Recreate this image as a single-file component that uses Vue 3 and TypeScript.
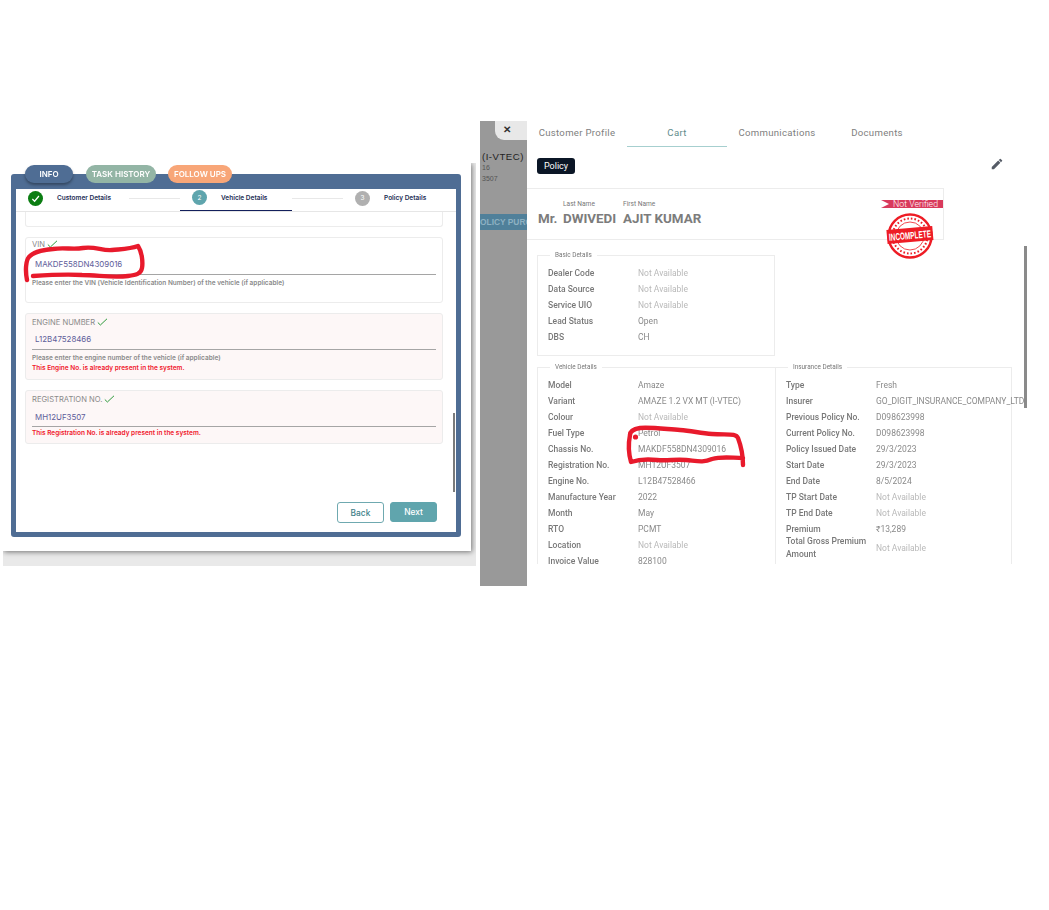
<script setup lang="ts">
type Row = { label: string; value: string; tall?: boolean }
const basic: Row[] = [
  { label: 'Dealer Code', value: 'Not Available' },
  { label: 'Data Source', value: 'Not Available' },
  { label: 'Service UIO', value: 'Not Available' },
  { label: 'Lead Status', value: 'Open' },
  { label: 'DBS', value: 'CH' },
]
const vehicle: Row[] = [
  { label: 'Model', value: 'Amaze' },
  { label: 'Variant', value: 'AMAZE 1.2 VX MT (I-VTEC)' },
  { label: 'Colour', value: 'Not Available' },
  { label: 'Fuel Type', value: 'Petrol' },
  { label: 'Chassis No.', value: 'MAKDF558DN4309016' },
  { label: 'Registration No.', value: 'MH12UF3507' },
  { label: 'Engine No.', value: 'L12B47528466' },
  { label: 'Manufacture Year', value: '2022' },
  { label: 'Month', value: 'May' },
  { label: 'RTO', value: 'PCMT' },
  { label: 'Location', value: 'Not Available' },
  { label: 'Invoice Value', value: '828100' },
]
const insurance: Row[] = [
  { label: 'Type', value: 'Fresh' },
  { label: 'Insurer', value: 'GO_DIGIT_INSURANCE_COMPANY_LTD' },
  { label: 'Previous Policy No.', value: 'D098623998' },
  { label: 'Current Policy No.', value: 'D098623998' },
  { label: 'Policy Issued Date', value: '29/3/2023' },
  { label: 'Start Date', value: '29/3/2023' },
  { label: 'End Date', value: '8/5/2024' },
  { label: 'TP Start Date', value: 'Not Available' },
  { label: 'TP End Date', value: 'Not Available' },
  { label: 'Premium', value: '₹13,289' },
  { label: 'Total Gross Premium Amount', value: 'Not Available', tall: true },
]
const sections = [
  { title: 'Vehicle Details', rows: vehicle },
  { title: 'Insurance Details', rows: insurance },
]
</script>

<template>
  <div class="canvas">
    <section class="left">
      <div class="sheet">
        <div class="tabs">
          <span class="tab info">INFO</span>
          <span class="tab history">TASK HISTORY</span>
          <span class="tab follow">FOLLOW UPS</span>
        </div>
        <div class="frame">
          <div class="stepper">
            <div class="step first">
              <span class="dot done">
                <svg width="9" height="9" viewBox="0 0 10 10"><path d="M1.5 5.5 4 8 8.8 2.2" fill="none" stroke="#fff" stroke-width="1.4" /></svg>
              </span>
              <span class="step-text">Customer Details</span>
            </div>
            <i class="step-line"></i>
            <div class="step active">
              <span class="dot teal">2</span>
              <span class="step-text">Vehicle Details</span>
            </div>
            <i class="step-line"></i>
            <div class="step last">
              <span class="dot grey">3</span>
              <span class="step-text">Policy Details</span>
            </div>
          </div>
          <div class="form">
            <div class="card stub"></div>
            <div class="card vin">
              <div class="label">VIN<svg class="tick" width="11" height="8" viewBox="0 0 11 8"><path d="M.8 4.5 3.4 7 10 .8" fill="none" stroke="#2e9a3c" stroke-width="1" /></svg></div>
              <div class="value">MAKDF558DN4309016</div>
              <div class="help">Please enter the VIN (Vehicle Identification Number) of the vehicle (if applicable)</div>
            </div>
            <div class="card warn engine">
              <div class="label">ENGINE NUMBER<svg class="tick" width="11" height="8" viewBox="0 0 11 8"><path d="M.8 4.5 3.4 7 10 .8" fill="none" stroke="#2e9a3c" stroke-width="1" /></svg></div>
              <div class="value">L12B47528466</div>
              <div class="help">Please enter the engine number of the vehicle (if applicable)</div>
              <div class="error">This Engine No. is already present in the system.</div>
            </div>
            <div class="card warn reg">
              <div class="label">REGISTRATION NO.<svg class="tick" width="11" height="8" viewBox="0 0 11 8"><path d="M.8 4.5 3.4 7 10 .8" fill="none" stroke="#2e9a3c" stroke-width="1" /></svg></div>
              <div class="value">MH12UF3507</div>
              <div class="error tight">This Registration No. is already present in the system.</div>
            </div>
            <div class="actions">
              <button class="btn back">Back</button>
              <button class="btn next">Next</button>
            </div>
            <i class="form-scroll"></i>
          </div>
        </div>
      </div>
    </section>

    <aside class="strip">
      <div class="close">✕</div>
      <div class="strip-title">(I-VTEC)</div>
      <div class="strip-sub first-sub">16</div>
      <div class="strip-sub">3507</div>
      <div class="strip-band">OLICY PURC</div>
    </aside>

    <main class="panel">
      <nav class="nav">
        <span class="nav-item">Customer Profile</span>
        <span class="nav-item current">Cart</span>
        <span class="nav-item">Communications</span>
        <span class="nav-item">Documents</span>
      </nav>
      <div class="badge-row">
        <span class="badge">Policy</span>
        <svg class="pencil" width="14" height="14" viewBox="0 0 24 24"><path fill="#555b66" d="M3 17.25V21h3.75L17.81 9.94l-3.75-3.75L3 17.25zM20.71 7.04a1 1 0 0 0 0-1.41l-2.34-2.34a1 1 0 0 0-1.41 0l-1.83 1.83 3.75 3.75 1.83-1.83z" /></svg>
      </div>
      <div class="name-box">
        <div class="name-col title"><span class="name-label">&nbsp;</span><b>Mr.</b></div>
        <div class="name-col last-name"><span class="name-label">Last Name</span><b>DWIVEDI</b></div>
        <div class="name-col"><span class="name-label">First Name</span><b>AJIT KUMAR</b></div>
        <span class="ribbon">Not Verified</span>
        <svg class="stamp" width="48" height="48" viewBox="0 0 48 48">
          <circle cx="24" cy="24" r="21.5" fill="#fff" stroke="#ee1c25" stroke-width="2.4" />
          <circle cx="24" cy="24" r="17.5" fill="none" stroke="#ee1c25" stroke-width="2" stroke-dasharray="1.6 2" />
          <circle cx="24" cy="24" r="14" fill="none" stroke="#ee1c25" stroke-width=".8" />
          <g transform="rotate(-5 24 24)">
            <rect x="1" y="16" width="46" height="14" fill="#ee1c25" />
            <text x="24" y="27" text-anchor="middle" textLength="42" lengthAdjust="spacingAndGlyphs" class="stamp-text">INCOMPLETE</text>
          </g>
        </svg>
      </div>

      <div class="body">
        <div class="group basic">
          <span class="legend">Basic Details</span>
          <div v-for="row in basic" :key="row.label" class="row">
            <span class="k">{{ row.label }}</span>
            <span class="v" :class="{ na: row.value === 'Not Available' }">{{ row.value }}</span>
          </div>
        </div>
        <div class="columns">
          <div v-for="sec in sections" :key="sec.title" class="group col">
            <span class="legend">{{ sec.title }}</span>
            <div v-for="row in sec.rows" :key="row.label" class="row" :class="{ tall: row.tall }">
              <span class="k">{{ row.label }}</span>
              <span class="v" :class="{ na: row.value === 'Not Available' }">{{ row.value }}</span>
            </div>
          </div>
        </div>
      </div>
      <i class="panel-scroll"></i>
    </main>

    <svg class="ink" width="1049" height="910" viewBox="0 0 1049 910">
      <path d="M27 280C25 270 26 260 29 257C33 252 42 250 53 249C65 247 72 250 83 248C95 246 102 251 112 250C122 249 130 249 138 246C142 252 143 262 142 268C141 274 136 275 128 276C112 278 98 275 82 275C66 274 48 275 33 276" />
      <path d="M743 465C743 456 741 446 738 438C736 433 728 435 712 434C700 433 692 431 680 430C665 429 650 427 640 428C634 429 630 431 630 435C628 445 629 455 631 462C640 459 648 459 657 460C668 461 675 459 686 460C697 461 703 463 712 459C722 456 732 458 743 458" />
      <circle cx="635.5" cy="437" r="2.6" />
    </svg>
  </div>
</template>

<style>
html, body { margin: 0; background: #fff; }
</style>

<style scoped>
.canvas {
  position: relative;
  width: 1049px;
  height: 910px;
  display: flex;
  align-items: flex-start;
  overflow: hidden;
  background: #fff;
}
.left {
  width: 473px;
  height: 403px;
  margin: 163px 0 0 3px;
  overflow: hidden;
  background: #e9e9e9;
  flex: none;
}
.sheet {
  width: 468px;
  height: 388px;
  box-sizing: border-box;
  padding: 2px 0 0 8px;
  background: #fff;
  box-shadow: 1px 1px 5px rgba(0, 0, 0, .5);
  font-family: "Inter", "Noto Sans", sans-serif;
  filter: blur(.3px);
}
.tabs {
  position: relative;
  z-index: 1;
  display: flex;
  height: 18px;
  margin-bottom: -9px;
  padding-left: 14px;
}
.tab {
  display: flex;
  align-items: center;
  justify-content: center;
  height: 18px;
  border-radius: 9px;
  font-size: 8px;
  font-weight: 600;
  color: #fff;
  white-space: nowrap;
}
.info { width: 48px; margin-right: 13px; background: #4f6d94; box-shadow: 0 2px 3px rgba(0, 0, 0, .35); }
.history { width: 70px; margin-right: 12px; background: #93b5a5; }
.follow { width: 64px; background: #f8a678; }
.frame {
  width: 450px;
  height: 363px;
  box-sizing: border-box;
  border: 5px solid #4f6d94;
  border-top-width: 15px;
  border-radius: 3px;
  background: #fff;
}
.stepper {
  display: flex;
  align-items: stretch;
  height: 23px;
  box-sizing: border-box;
  border-bottom: 1px solid #e6e6e6;
}
.step {
  display: flex;
  align-items: center;
  height: 22px;
  box-sizing: border-box;
  padding-bottom: 4px;
  color: #1c2e55;
}
.step.first { width: 113px; padding-left: 12px; }
.step.active { width: 112px; padding-left: 12px; border-bottom: 1px solid #14205c; }
.step.last { padding-left: 12px; }
.dot {
  display: flex;
  align-items: center;
  justify-content: center;
  width: 15px;
  height: 15px;
  margin-right: 14px;
  border-radius: 50%;
  font-size: 6.5px;
  color: #fff;
  flex: none;
}
.done { background: #0b7d12; }
.teal { background: #5fa5ad; }
.grey { background: #b0b0b0; }
.step-text { font-size: 6.5px; font-weight: 600; white-space: nowrap; }
.step-line { width: 51px; height: 1px; margin: 9px 0 0; background: #e8e8e8; }
.form {
  position: relative;
  height: 320px;
  box-sizing: border-box;
  padding: 0 13px 0 9px;
  overflow: hidden;
}
.card {
  box-sizing: border-box;
  width: 418px;
  margin-bottom: 10px;
  padding: 3px 6px 0;
  border: 1px solid #ececec;
  border-radius: 3px;
  background: #fff;
}
.card.stub { height: 15px; border-top: 0; border-radius: 0 0 3px 3px; }
.card.vin { height: 66px; }
.card.engine { height: 67px; }
.card.reg { height: 54px; }
.warn { background: #fdf7f7; }
.label {
  display: flex;
  align-items: flex-start;
  height: 12px;
  gap: 2px;
  font-size: 7.6px;
  line-height: 12px;
  color: #8a8a8a;
  white-space: pre;
}
.vin .label { margin-top: -2px; }
.tick { margin-top: 1px; }
.value {
  height: 17px;
  margin-top: 3px;
  padding-left: 3px;
  border-bottom: 1px solid #a5a5a5;
  font-size: 7.9px;
  line-height: 15px;
  color: #5e5d9a;
}
.vin .value { margin-top: 6px; }
.reg .value { line-height: 16px; }
.help {
  margin-top: 4px;
  font-size: 6.5px;
  line-height: 9px;
  font-weight: 600;
  color: #8a8a8a;
}
.error {
  margin-top: 1px;
  font-size: 6.5px;
  line-height: 9px;
  font-weight: 600;
  color: #f0182c;
}
.error.tight { margin-top: 2px; }
.actions {
  display: flex;
  justify-content: flex-end;
  gap: 6px;
  width: 412px;
  margin-top: 58px;
}
.btn {
  width: 47px;
  height: 21px;
  padding: 0;
  border-radius: 3px;
  font-family: inherit;
  font-size: 8.4px;
  font-weight: 500;
}
.back { border: 1px solid #6fa9b0; background: #fff; color: #3e8088; }
.next { border: 1px solid #60a5ad; background: #60a5ad; color: #fff; height: 20px; }
.form-scroll {
  position: absolute;
  top: 201px;
  right: 1px;
  width: 2px;
  height: 79px;
  background: #7b7b7b;
}
.strip {
  position: relative;
  width: 47px;
  height: 465px;
  margin: 121px 0 0 4px;
  flex: none;
  overflow: hidden;
  background: #999;
  font-family: "Liberation Sans", sans-serif;
}
.close {
  display: flex;
  align-items: center;
  justify-content: center;
  box-sizing: border-box;
  width: 32px;
  height: 19px;
  margin-left: 15px;
  padding: 0 8px 3px 0;
  border-bottom-left-radius: 9px;
  background: #e8e8e8;
  font-size: 10px;
  font-weight: 700;
  color: #333;
}
.strip-title {
  margin: 11px 0 0 2px;
  font-size: 9.6px;
  letter-spacing: .5px;
  color: #222;
  white-space: nowrap;
}
.strip-sub { padding-left: 2px; font-size: 7px; line-height: 11px; color: #555; }
.first-sub { margin-top: 0; }
.strip-band {
  width: 47px;
  height: 16px;
  margin-top: 30px;
  overflow: hidden;
  background: #50809a;
  box-shadow: 0 -19px 0 -18px #8c8c8c;
  font-size: 8.4px;
  font-weight: 700;
  line-height: 16px;
  color: #8eb1c2;
  white-space: nowrap;
}
.panel {
  position: relative;
  flex: 1;
  height: 443px;
  margin-top: 121px;
  overflow: hidden;
  background: #fff;
  font-family: "Roboto", sans-serif;
}
.nav { display: flex; height: 27px; }
.nav-item {
  display: flex;
  align-items: center;
  justify-content: center;
  width: 100px;
  height: 23px;
  font-size: 9.6px;
  letter-spacing: .3px;
  color: #808080;
  white-space: nowrap;
}
.nav-item.current { border-bottom: 1px solid #a6cfcf; height: 26px; padding-bottom: 3px; box-sizing: border-box; color: #5f8c8c; }
.badge-row {
  position: relative;
  display: flex;
  align-items: center;
  height: 40px;
  padding: 10px 0 0 10px;
  box-sizing: border-box;
}
.badge {
  width: 38px;
  height: 16px;
  margin-top: -14px;
  border-radius: 3px;
  background: #0b1626;
  font-size: 9px;
  line-height: 16px;
  text-align: center;
  color: #fff;
}
.pencil { position: absolute; left: 463px; top: 9px; }
.name-box {
  position: relative;
  display: flex;
  align-items: flex-start;
  width: 417px;
  height: 52px;
  box-sizing: border-box;
  padding: 11px 0 0 11px;
  border: 1px solid #ececec;
  border-left: 0;
}
.name-col { display: flex; flex-direction: column; }
.name-col.title { width: 25px; }
.name-col.last-name { width: 60px; }
.name-label { height: 9px; font-size: 6.6px; line-height: 9px; color: #777; }
.name-col b { margin-top: 2px; font-size: 13.4px; line-height: 16px; font-weight: 700; color: #7c7c7c; white-space: nowrap; }
.ribbon {
  position: absolute;
  top: 11px;
  right: 0;
  width: 62px;
  height: 8px;
  box-sizing: border-box;
  padding-left: 12px;
  background: #d93a5c;
  clip-path: polygon(0 0, 100% 0, 100% 100%, 0 100%, 8px 50%);
  font-size: 8.8px;
  font-weight: 300;
  line-height: 8px;
  color: #fff;
  white-space: nowrap;
}
.stamp { position: absolute; left: 359px; top: 23px; z-index: 2; overflow: visible; }
.stamp-text {
  font-family: "Liberation Sans", sans-serif;
  font-size: 10px;
  font-weight: 700;
  fill: #fff;
}
.body { padding: 15px 0 0 10px; filter: blur(.25px); }
.group {
  position: relative;
  box-sizing: border-box;
  width: 238px;
  padding: 9px 0 0 10px;
  border: 1px solid #ececec;
}
.basic { height: 101px; margin-bottom: 11px; }
.columns { display: flex; }
.col { height: 260px; }
.col:first-child { border-right: 0; }
.col + .col { width: 237px; }
.legend {
  position: absolute;
  top: -5px;
  left: 12px;
  padding: 0 5px;
  background: #fff;
  font-size: 6.4px;
  line-height: 9px;
  color: #777;
  white-space: nowrap;
}
.row {
  display: flex;
  align-items: center;
  height: 16px;
  font-size: 8.5px;
  white-space: nowrap;
}
.row.tall { height: 24px; margin-top: -1px; }
.row.tall .k { white-space: normal; line-height: 13px; }
.k { width: 90px; flex: none; font-weight: 500; color: #787878; }
.v { color: #8a8a8a; }
.v.na { color: #b9b9b9; }
.panel-scroll {
  position: absolute;
  top: 125px;
  left: 497px;
  width: 3px;
  height: 162px;
  background: #8a8a8a;
}
.ink {
  position: absolute;
  top: 0;
  left: 0;
  z-index: 5;
  pointer-events: none;
  fill: none;
  stroke: #e81a2c;
  stroke-width: 4.4;
  stroke-linecap: round;
  stroke-linejoin: round;
}
.ink circle { fill: #e81a2c; stroke: none; }
</style>
